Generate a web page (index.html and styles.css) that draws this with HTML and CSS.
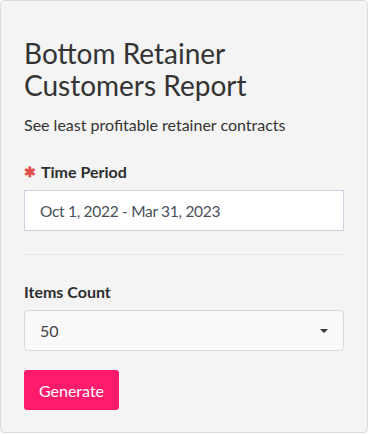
FILE: index.html
```html
<!DOCTYPE html>
<html>
<head>
<meta charset="utf-8">
<link rel="stylesheet" href="styles.css">
</head>
<body>
<div class="card">
  <h1 class="title">Bottom Retainer Customers Report</h1>
  <p class="subtitle">See least profitable retainer contracts</p>
  <div class="field">
    <label class="label"><span class="req">&#x2731;</span>Time Period</label>
    <div class="input">Oct 1, 2022 - Mar 31, 2023</div>
  </div>
  <hr class="divider">
  <div class="field">
    <label class="label">Items Count</label>
    <div class="select"><span>50</span><span class="caret"></span></div>
  </div>
  <button class="btn">Generate</button>
</div>
</body>
</html>
```
FILE: styles.css
```css
html, body { margin: 0; padding: 0; background: #fff; }
body { font-family: Lato, "Open Sans", sans-serif; color: #333; }
.card {
  box-sizing: border-box;
  width: 368px;
  height: 433px;
  background: #f4f4f4;
  border: 1px solid #dcdcdc;
  border-radius: 4px;
  padding: 36px 23px 0 23px;
}
.title {
  margin: 0;
  font-weight: 400;
  font-size: 28px;
  line-height: 32px;
  color: #333;
  width: 260px;
}
.subtitle { margin: 14px 0 0; font-size: 16px; line-height: 20px; color: #333; }
.field { margin-top: 27px; }
.label { display: flex; align-items: center; font-weight: 700; font-size: 16px; line-height: 20px; color: #2d2d2d; }
.req { color: #e0504a; font-size: 14px; margin-right: 5px; }
.input {
  margin-top: 8px;
  height: 41px;
  box-sizing: border-box;
  background: #fff;
  border: 1px solid #cdd3de;
  padding: 0 15px;
  display: flex; align-items: center;
  font-size: 15.5px; letter-spacing: -0.3px; color: #4a4f5a;
}
.divider { border: 0; border-top: 1px solid #e6e6e6; margin: 23px 0 0; }
.select {
  margin-top: 8px;
  height: 41px; box-sizing: border-box;
  background: #f9f9f9;
  border: 1px solid #dadada;
  border-radius: 4px;
  padding: 0 15px;
  display: flex; align-items: center; justify-content: space-between;
  font-size: 16px; color: #444;
}
.caret { width: 0; height: 0; border-left: 4px solid transparent; border-right: 4px solid transparent; border-top: 4px solid #333; }
.btn {
  margin-top: 19px;
  width: 95px; height: 40px;
  background: #ff1a6b; color: #fff; border: 0; border-radius: 3px;
  font-family: inherit; font-size: 16px;
}
```
